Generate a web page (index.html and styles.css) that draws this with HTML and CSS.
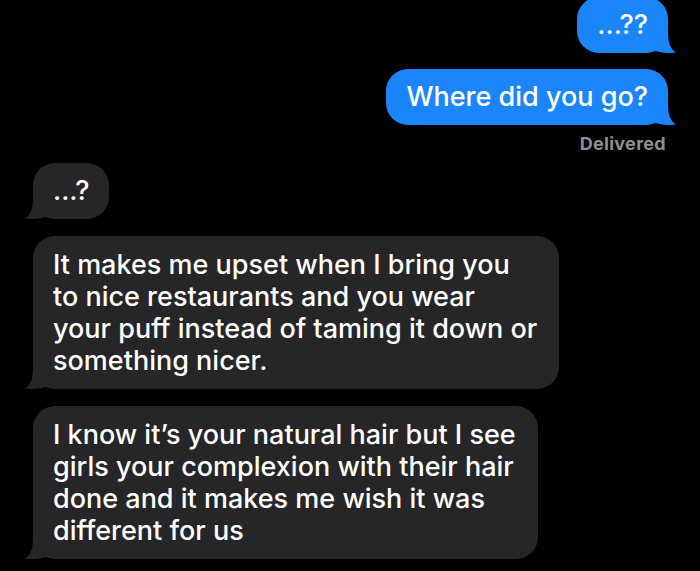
FILE: index.html
```html
<!DOCTYPE html>
<html>
	<head>
		<link rel="stylesheet" href="styles.css">
		<title>Messages</title>
	</head>
	<body>
		<div class="thread">
			<!-- sent -->
			<div class="bubble sent first">...??
				<svg class="tail" width="30" height="22" viewBox="0 0 30 22"><path d="M22 0 C22 11 24 18 30 21.6 C23 22.5 15 22 8 19.5 L8 0 Z"/></svg>
			</div>
			<div class="bubble sent">Where did you go?
				<svg class="tail" width="30" height="22" viewBox="0 0 30 22"><path d="M22 0 C22 11 24 18 30 21.6 C23 22.5 15 22 8 19.5 L8 0 Z"/></svg>
			</div>
			<div class="status">Delivered</div>

			<!-- received -->
			<div class="bubble received short">...?
				<svg class="tail" width="30" height="22" viewBox="0 0 30 22"><path d="M22 0 C22 11 24 18 30 21.6 C23 22.5 15 22 8 19.5 L8 0 Z"/></svg>
			</div>
			<div class="bubble received long">It makes me upset when I bring you<br>to nice restaurants and you wear<br>your puff instead of taming it down or<br>something nicer.
				<svg class="tail" width="30" height="22" viewBox="0 0 30 22"><path d="M22 0 C22 11 24 18 30 21.6 C23 22.5 15 22 8 19.5 L8 0 Z"/></svg>
			</div>
			<div class="bubble received long">I know it’s your natural hair but I see<br>girls your complexion with their hair<br>done and it makes me wish it was<br>different for us
				<svg class="tail" width="30" height="22" viewBox="0 0 30 22"><path d="M22 0 C22 11 24 18 30 21.6 C23 22.5 15 22 8 19.5 L8 0 Z"/></svg>
			</div>
		</div>
	</body>
</html>
```
FILE: styles.css
```css
body {
	margin: 0;
	background-color: #000000;
	font-family: "Inter", "Noto Sans", sans-serif;
	overflow: hidden;
}
.thread {
	display: flex;
	flex-direction: column;
	padding: 0 32px 0 33px;
}
.bubble {
	position: relative;
	padding: 12px 20px;
	font-size: 27px;
	font-weight: 500;
	line-height: 32px;
	color: #ffffff;
	border-radius: 22px;
	white-space: nowrap;
}
.sent {
	align-self: flex-end;
	background-color: #1b86fb;
	margin-top: 16px;
}
.sent.first {
	margin-top: -3px;
}
.received {
	align-self: flex-start;
	background-color: #262628;
	margin-top: 17px;
}
.received.short {
	margin-top: 9px;
}
.received.long {
	padding: 13px 22px 12px 20px;
}
.tail {
	position: absolute;
	bottom: 0;
	right: -8px;
}
.sent .tail {
	fill: #1b86fb;
}
.received .tail {
	fill: #262628;
	right: auto;
	left: -8px;
	transform: scaleX(-1);
}
.status {
	align-self: flex-end;
	margin-top: 9px;
	margin-right: 2px;
	font-size: 18px;
	font-weight: 700;
	letter-spacing: 0.3px;
	line-height: 20px;
	color: #8e8e93;
}
```
